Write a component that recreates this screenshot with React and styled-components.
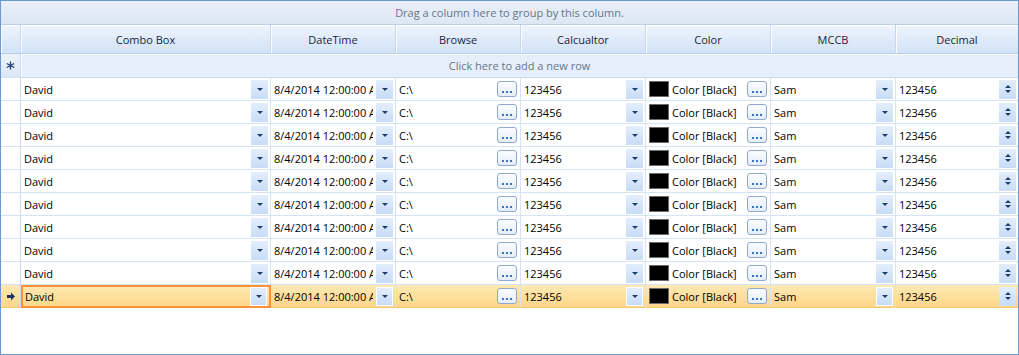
import React from "react";
import styled, { createGlobalStyle, css } from "styled-components";

const GlobalStyle = createGlobalStyle`
  html, body { margin: 0; padding: 0; background: #fff; }
  body { font-family: "Open Sans", "Noto Sans", sans-serif; font-size: 11px; }
  * { box-sizing: border-box; }
`;

const columns = [
  { title: "Combo Box", width: 250, kind: "combo", value: "David" },
  { title: "DateTime", width: 125, kind: "combo", value: "8/4/2014 12:00:00 AM" },
  { title: "Browse", width: 125, kind: "browse", value: "C:\\" },
  { title: "Calcualtor", width: 125, kind: "combo", value: "123456" },
  { title: "Color", width: 125, kind: "color", value: "Color [Black]" },
  { title: "MCCB", width: 125, kind: "combo", value: "Sam" },
  { title: "Decimal", width: 122, kind: "spin", value: "123456" },
];

const rowCount = 10;

const Grid = styled.div`
  width: 1019px;
  height: 355px;
  border: 1px solid #6b98d0;
  display: flex;
  flex-direction: column;
  overflow: hidden;
  background: #fff;
`;

const GroupPanel = styled.div`
  height: 24px;
  flex: none;
  display: flex;
  align-items: center;
  justify-content: center;
  color: #687789;
  background: linear-gradient(#e8eff9, #dde7f4);
  border-bottom: 1px solid #b9cde8;
`;

const Row = styled.div`
  display: flex;
  flex: none;
  height: ${({ $h }) => $h}px;
  ${({ $current }) =>
    $current &&
    css`
      background: linear-gradient(#fee9b3, #fdd588);
    `}
`;

const HeaderCell = styled.div`
  width: ${({ $w }) => $w}px;
  flex: none;
  display: flex;
  align-items: center;
  justify-content: center;
  color: #1a2538;
  background: linear-gradient(#eef4fc 0%, #e0ebfa 50%, #d2e2f7 100%);
  border-right: 1px solid #c3d6ee;
  border-bottom: 1px solid #b9cde8;
  box-shadow: inset 1px 1px 0 #fff;
  &:last-child { border-right: none; }
`;

const Indicator = styled.div`
  width: 20px;
  flex: none;
  display: flex;
  align-items: center;
  justify-content: center;
  border-right: 1px solid #c9dbf1;
  border-bottom: 1px solid ${({ $current }) => ($current ? "#f7c870" : "#d5e3f4")};
  ${({ $blue }) =>
    $blue &&
    css`
      background: linear-gradient(#edf3fb, #dce7f6);
    `}
`;

const NewRowCell = styled.div`
  flex: 1;
  display: flex;
  align-items: center;
  justify-content: center;
  color: #66768a;
  background: #e6eef9;
  border-bottom: 1px solid #c9dbf1;
  box-shadow: inset 1px 1px 0 #fff;
`;

const Cell = styled.div`
  width: ${({ $w }) => $w}px;
  flex: none;
  display: flex;
  align-items: center;
  gap: 3px;
  padding: 0 2px 0 3px;
  color: #000;
  border-right: 1px solid #d5e3f4;
  border-bottom: 1px solid ${({ $current }) => ($current ? "#f7c870" : "#d5e3f4")};
  overflow: hidden;
  &:last-child { border-right: none; }
  ${({ $focus }) =>
    $focus &&
    css`
      border: 2px solid #fe913a;
      padding-left: 2px;
    `}
`;

const Value = styled.span`
  flex: 1;
  min-width: 0;
  white-space: nowrap;
  overflow: hidden;
  text-overflow: clip;
`;

const DropButton = styled.div`
  width: 17px;
  height: 19px;
  flex: none;
  display: flex;
  flex-direction: column;
  align-items: center;
  justify-content: center;
  gap: 2px;
  background: linear-gradient(#e3eefc, #c7dcf7);
  ${({ $current }) =>
    $current &&
    css`
      border: 1px solid #fff;
    `}
`;

const Arrow = styled.span`
  width: 0;
  height: 0;
  border-left: 3px solid transparent;
  border-right: 3px solid transparent;
  ${({ $up }) =>
    $up
      ? css`border-bottom: 3px solid #1f3c6e;`
      : css`border-top: 3px solid #1f3c6e;`}
`;

const BrowseButton = styled.div`
  width: 20px;
  height: 16px;
  flex: none;
  margin-right: 1px;
  border: 1px solid #8ea9cd;
  border-radius: 3px;
  background: linear-gradient(#fbfdff, #e4edf8);
  display: flex;
  align-items: flex-end;
  justify-content: center;
  gap: 2px;
  padding-bottom: 3px;
`;

const Dot = styled.span`
  width: 2px;
  height: 2px;
  background: #3a74c4;
`;

const Swatch = styled.span`
  width: 20px;
  height: 16px;
  flex: none;
  background: #000;
  border: 1px solid #6b6b6b;
`;

const Filler = styled.div`
  flex: 1;
`;

const Dots = () => (
  <BrowseButton>
    <Dot />
    <Dot />
    <Dot />
  </BrowseButton>
);

function Editor({ col, current }) {
  if (col.kind === "browse") {
    return (
      <>
        <Value>{col.value}</Value>
        <Dots />
      </>
    );
  }
  if (col.kind === "color") {
    return (
      <>
        <Swatch />
        <Value>{col.value}</Value>
        <Dots />
      </>
    );
  }
  if (col.kind === "spin") {
    return (
      <>
        <Value>{col.value}</Value>
        <DropButton>
          <Arrow $up />
          <Arrow />
        </DropButton>
      </>
    );
  }
  return (
    <>
      <Value>{col.value}</Value>
      <DropButton $current={current}>
        <Arrow />
      </DropButton>
    </>
  );
}

const CurrentArrow = () => (
  <svg width="8" height="9" viewBox="0 0 8 9">
    <path d="M0 3h4V0.5l4 4L4 8.5V6H0z" fill="#1c3566" />
  </svg>
);

const Star = () => (
  <svg width="9" height="9" viewBox="0 0 9 9">
    <g stroke="#24407a" strokeWidth="1.3">
      <path d="M4.5 0.5v8M0.8 2.5l7.4 4M0.8 6.5l7.4-4" />
    </g>
  </svg>
);

export default function App() {
  return (
    <>
      <GlobalStyle />
      <Grid>
        <GroupPanel>Drag a column here to group by this column.</GroupPanel>
        <Row $h={29}>
          <HeaderCell $w={20} />
          {columns.map((c) => (
            <HeaderCell key={c.title} $w={c.width}>
              {c.title}
            </HeaderCell>
          ))}
        </Row>
        <Row $h={24}>
          <Indicator $blue>
            <Star />
          </Indicator>
          <NewRowCell>Click here to add a new row</NewRowCell>
        </Row>
        {Array.from({ length: rowCount }, (_, i) => {
          const current = i === rowCount - 1;
          return (
            <Row key={i} $h={23} $current={current}>
              <Indicator $current={current}>{current && <CurrentArrow />}</Indicator>
              {columns.map((c, j) => (
                <Cell
                  key={c.title}
                  $w={c.width}
                  $current={current}
                  $focus={current && j === 0}
                >
                  <Editor col={c} current={current} />
                </Cell>
              ))}
            </Row>
          );
        })}
        <Filler />
      </Grid>
    </>
  );
}
